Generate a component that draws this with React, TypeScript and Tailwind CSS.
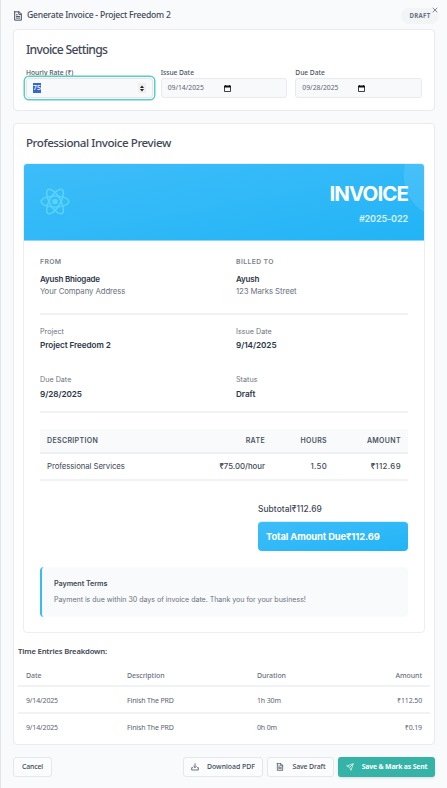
import React from "react";
import { X } from "lucide-react";

const ui = "font-['Noto_Sans',sans-serif]";
const doc = "font-['Inter','Noto_Sans',sans-serif]";

function FileIcon({ className = "" }: { className?: string }) {
  return (
    <svg viewBox="0 0 24 24" fill="none" stroke="currentColor" strokeWidth="2.2" strokeLinejoin="round" strokeLinecap="round" className={className}>
      <path d="M4 2h11l5 5v15H4V2z" />
      <path d="M14 2v6h6M8 9h2M8 13h8M8 17h8" />
    </svg>
  );
}

function CalendarIcon() {
  return (
    <svg viewBox="0 0 7 7" className="h-[7px] w-[7px] shrink-0">
      <path d="M.5 1h6v5.5h-6z" fill="none" stroke="#111" strokeWidth=".8" />
      <path d="M.2 .8h6.6v1.7H.2zM1.2 0h.8v1h-.8zM5 0h.8v1H5z" fill="#111" />
    </svg>
  );
}

function DateField({ label, value }: { label: string; value: string }) {
  return (
    <div className="flex-1">
      <div className="h-3 text-[6.7px] leading-3 font-medium tracking-[-0.05px] text-[#4b5563]">{label}</div>
      <div className="mt-[-1px] flex h-5 items-center rounded-[3px] border border-[#e8eaf0] bg-[#f8f9fb] px-[6px] text-[6.8px] text-[#5b6472]">
        <span className="w-[56px]">{value}</span>
        <CalendarIcon />
      </div>
    </div>
  );
}

function Detail({ label, value, low = false }: { label: string; value: string; low?: boolean }) {
  return (
    <div className="w-[196px]">
      <div className="h-[13px] text-[7.2px] leading-[13px] text-[#6b7280]">{label}</div>
      <div className={`h-[14px] text-[8.2px] font-semibold tracking-[-0.07px] text-[#2d3748] ${low ? "leading-[17px]" : "leading-[15px]"}`}>{value}</div>
    </div>
  );
}

function Party({ label, name, address }: { label: string; name: string; address: string }) {
  return (
    <div className="w-[196px] shrink-0">
      <div className="h-[19px] text-[6.8px] leading-[15px] font-semibold tracking-[0.4px] text-[#7b818e]">{label}</div>
      <div className="h-3 text-[8px] leading-[13px] font-semibold tracking-[-0.2px] text-[#2d3748]">{name}</div>
      <div className="h-3 text-[7.8px] leading-3 tracking-[-0.09px] text-[#6b7280]">{address}</div>
    </div>
  );
}

const entries = [
  ["9/14/2025", "Finish The PRD", "1h 30m", "₹112.50"],
  ["9/14/2025", "Finish The PRD", "0h 0m", "₹0.19"],
];

const entryGrid = "grid grid-cols-[101px_130px_1fr_70px] px-2";

export default function App() {
  return (
    <div className={`${ui} h-[788px] w-[447px] overflow-hidden border-l border-[#e2e4e8] bg-[#f9fafc] pr-3 pl-3 whitespace-nowrap text-[#414956]`}>
      <header className="flex h-[29px] items-center pt-[2px]">
        <FileIcon className="h-[10px] w-[10px] text-[#374151]" />
        <h1 className="ml-1 text-[8.6px] font-medium tracking-[-0.23px]">Generate Invoice - Project Freedom 2</h1>
        <div className="relative mr-[-4px] ml-auto flex h-4 w-[38px] items-center justify-center rounded-full bg-[#f2f4f6] text-[6.1px] font-bold tracking-[0.3px] text-[#6b7280]">
          DRAFT
          <X className="absolute top-[-2px] right-0 h-[8px] w-[8px] text-[#6b7280]" strokeWidth={2.5} />
        </div>
      </header>

      <section className="h-[82px] w-[422px] rounded-[4px] border border-[#e8eaed] bg-white px-3">
        <h2 className="h-[37px] text-[12.2px] leading-[39px] font-medium tracking-[-0.72px]">Invoice Settings</h2>
        <div className="flex gap-[8px]">
          <div className="flex-1">
            <div className="h-3 text-[6.7px] leading-3 font-medium text-[#4b5563]">Hourly Rate (₹)</div>
            <div className="relative mt-[-1px] flex h-5 items-center rounded-[3px] border border-[#e2e5ec] bg-[#f8f9fb] px-[6px] text-[7px] ring-[1.5px] ring-[#5acdc1] ring-offset-1">
              <span className="bg-[#3367d1] leading-[10px] font-medium text-white">75</span>
              <span className="ml-auto flex h-[10px] w-[8px] flex-col items-center justify-center gap-[1px] bg-[#efefef]">
                <svg viewBox="0 0 4 6" className="h-[7px] w-[4px]"><path d="M2 0l2 2.4H0zM2 6l2-2.4H0z" fill="#222" /></svg>
              </span>
            </div>
          </div>
          <DateField label="Issue Date" value="09/14/2025" />
          <DateField label="Due Date" value="09/28/2025" />
        </div>
      </section>

      <section className="mt-3 h-[622px] w-[422px] rounded-[4px] border border-[#e8eaed] bg-white">
        <h2 className="h-[39px] pl-3 text-[11.6px] leading-[38px] font-medium tracking-[-0.45px]">Professional Invoice Preview</h2>

        <article className={`${doc} mx-[9px] h-[470px] overflow-hidden rounded-[4px] border border-[#eceef1]`}>
          <div className="relative flex h-[77px] justify-between overflow-hidden border-b border-[#8bd7fa] bg-gradient-to-br from-[#3dbdf9] to-[#21b4f6] px-4">
            <div className="absolute top-[-31px] right-[-60px] h-[84px] w-[80px] rounded-full bg-white/10" />
            <svg viewBox="-11.5 -10.23 23 20.46" className="mt-[24px] h-[27px] w-[30px] text-[#61dafb] opacity-80">
              <circle r="2.2" fill="currentColor" />
              <g fill="none" stroke="currentColor" strokeWidth="1.2">
                <ellipse rx="10.6" ry="4.2" />
                <ellipse rx="10.6" ry="4.2" transform="rotate(60)" />
                <ellipse rx="10.6" ry="4.2" transform="rotate(120)" />
              </g>
            </svg>
            <div className="relative pt-[18px] text-right text-white">
              <div className="text-[20.5px] leading-6 font-bold tracking-[-0.93px]">INVOICE</div>
              <div className="text-[9.1px] leading-[25px] font-semibold tracking-[-0.15px] text-white/80">#2025-022</div>
            </div>
          </div>

          <div className="px-4">
            <div className="flex h-[74px] border-b-2 border-[#f1f2f5] pt-[13px]">
              <Party label="FROM" name="Ayush Bhiogade" address="Your Company Address" />
              <Party label="BILLED TO" name="Ayush" address="123 Marks Street" />
            </div>
            <div className="grid h-[98px] grid-cols-[196px_172px] grid-rows-[48px_1fr] border-b-2 border-[#f1f2f5] pt-[10px]">
              <Detail label="Project" value="Project Freedom 2" />
              <Detail label="Issue Date" value="9/14/2025" />
              <Detail label="Due Date" value="9/28/2025" low />
              <Detail label="Status" value="Draft" low />
            </div>

            <div className="mt-4">
              <div className="grid h-[25px] grid-cols-[148px_70px_62px_74px] border-b-2 border-[#eff0f4] bg-[#f9fafc] px-[7px] text-[7px] leading-[23px] font-semibold tracking-[0.35px] text-[#4b5563]">
                <span>DESCRIPTION</span>
                <span className="text-right">RATE</span>
                <span className="text-right">HOURS</span>
                <span className="text-right">AMOUNT</span>
              </div>
              <div className="grid h-[27px] grid-cols-[148px_70px_62px_74px] border-b-2 border-[#f1f2f5] px-[7px] text-[7.8px] leading-[25px] font-medium text-[#414956]">
                <span className="font-normal tracking-[-0.08px]">Professional Services</span>
                <span className="text-right">₹75.00/hour</span>
                <span className="text-right tracking-[0.3px]">1.50</span>
                <span className="text-right tracking-[0.4px]">₹112.69</span>
              </div>
            </div>

            <div className="mt-5 ml-auto w-[150px]">
              <div className="h-5 text-[8.4px] leading-[17px] font-medium tracking-[0.07px]">Subtotal₹112.69</div>
              <div className="h-[30px] rounded-[4px] border-t border-[#d9f0fc] bg-gradient-to-br from-[#3dbdf9] to-[#21b4f6] px-2 text-[9.4px] leading-[30px] font-bold tracking-[-0.11px] text-white">Total Amount Due₹112.69</div>
            </div>

            <div className="mt-4 h-[50px] rounded-[4px] border-l-2 border-[#35bbf6] bg-[#f9fafc] pt-[10px] pl-3">
              <div className="h-4 text-[7.2px] leading-[14px] font-semibold tracking-[-0.05px]">Payment Terms</div>
              <div className="text-[7.1px] leading-[14px] tracking-[-0.04px] text-[#6b7280]">Payment is due within 30 days of invoice date. Thank you for your business!</div>
            </div>
          </div>
        </article>

        <div className="mx-1 mt-3 text-[7px] text-[#5b6472]">
          <h3 className="h-[18px] text-[7.7px] leading-3 font-semibold tracking-[-0.18px] text-[#414956]">Time Entries Breakdown:</h3>
          <div className={`${entryGrid} h-[24px] border-b-2 border-[#f1f2f5] leading-[26px] font-medium tracking-[-0.08px] text-[#6b7280]`}>
            <span>Date</span>
            <span>Description</span>
            <span>Duration</span>
            <span className="text-right">Amount</span>
          </div>
          {entries.map((row, i) => (
            <div key={i} className={`${entryGrid} h-[27px] border-[#f1f2f5] leading-[27px] tracking-[-0.14px] ${i === 0 ? "border-b-2" : ""}`}>
              {row.map((cell, j) => (
                <span key={j} className={j === 3 ? "text-right" : ""}>{cell}</span>
              ))}
            </div>
          ))}
        </div>
      </section>

      <footer className="mt-3 flex h-5 w-[422px] gap-1 text-[6.9px] font-medium">
        <button className="mr-auto w-[39px] rounded-[3px] border border-[#e5e7eb] bg-[#fbfcfd] pt-px tracking-[-0.15px]">Cancel</button>
        <button className="flex w-[80px] items-center justify-center gap-2 rounded-[3px] border border-[#e5e7eb] bg-[#fbfcfd] pt-px">
          <svg viewBox="0 0 24 24" fill="none" stroke="currentColor" strokeWidth="2.2" className="h-2 w-2 -translate-y-px"><path d="M12 1v13M7 9l5 5 5-5M6 14H2v7h20v-7h-4" /></svg>
          Download PDF
        </button>
        <button className="flex w-[67px] items-center justify-center gap-[9px] rounded-[3px] border border-[#e5e7eb] bg-[#fbfcfd] pt-px tracking-[-0.1px]">
          <FileIcon className="h-2 w-2 -translate-y-px" />
          Save Draft
        </button>
        <button className="flex w-[97px] items-center justify-center gap-2 rounded-[3px] bg-[#35b3a6] pt-px font-bold tracking-[-0.2px] text-white shadow-sm">
          <svg viewBox="0 0 24 24" fill="none" stroke="currentColor" strokeWidth="2" strokeLinejoin="round" className="h-2 w-2 -translate-y-px"><path d="M22 2L15 22l-4-9-9-4 20-7zM22 2L11 13" /></svg>
          Save &amp; Mark as Sent
        </button>
      </footer>
    </div>
  );
}
